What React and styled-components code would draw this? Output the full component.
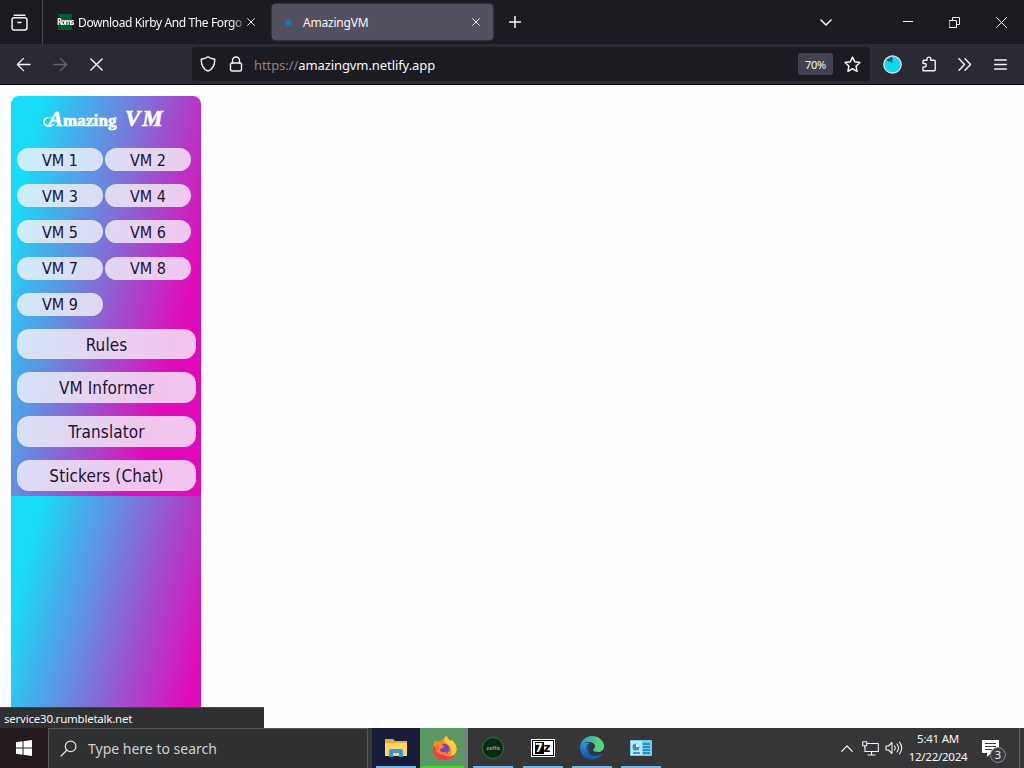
import styled, { createGlobalStyle, css } from "styled-components";

const vmRooms = [1, 2, 3, 4, 5, 6, 7, 8, 9];
const links = ["Rules", "VM Informer", "Translator", "Stickers (Chat)"];

const Icon = ({ w = 16, h = w, box = "0 0 16 16", sw = 1.4, color = "#f4f4f8", children }) => (
  <svg width={w} height={h} viewBox={box} fill="none" stroke={color} strokeWidth={sw}
       strokeLinecap="round" strokeLinejoin="round">
    {children}
  </svg>
);

const CloseIcon = ({ size = 8, sw = 1.2 }) => (
  <Icon w={size} sw={sw} box="0 0 10 10"><path d="M.7.7l8.6 8.6M9.3.7L.7 9.3" /></Icon>
);

const TabStrip = () => (
  <TabBar>
    <ViewButton>
      <Icon w={17}>
        <path d="M3 1.2h10M1 5.5q0-2 2-2h10q2 0 2 2V13q0 2-2 2H3q-2 0-2-2zM6.500 8h3" />
      </Icon>
    </ViewButton>
    <Tab $width={218}>
      <RomsIcon>Roms</RomsIcon>
      <TabTitle $fade $width={167}>Download Kirby And The Forgo</TabTitle>
      <CloseIcon />
    </Tab>
    <Tab $active $width={221}>
      <LoadingDot />
      <TabTitle $width={167}>AmazingVM</TabTitle>
      <CloseIcon />
    </Tab>
    <NewTab><Icon w={12} box="0 0 12 12" sw={1.5}><path d="M6 .5v11M.5 6h11" /></Icon></NewTab>
    <WindowButtons>
      <Icon w={12} h={7} box="0 0 12 7" sw={1.5}><path d="M1 1l5 5 5-5" /></Icon>
      <Icon w={10} h={10} box="0 0 10 10" sw={1}><path d="M0 4.500h10" /></Icon>
      <Icon w={11} h={11} box="0 0 11 11" sw={1}>
        <path d="M.5 3.500h7v7h-7zM3.500 3V.5h7v7H8" />
      </Icon>
      <Icon w={11} h={11} box="0 0 11 11" sw={1}><path d="M.5.5l10 10M10.500.5l-10 10" /></Icon>
    </WindowButtons>
  </TabBar>
);

const Navigation = () => (
  <NavBar>
    <NavButtons>
      <Icon w={15}><path d="M15 8H1.500M8 1.500L1.500 8 8 14.500" /></Icon>
      <Icon w={15} color="#66656d"><path d="M1 8h13.500M8 1.500L14.500 8 8 14.500" /></Icon>
      <CloseIcon size={13} sw={1.1} />
    </NavButtons>
    <AddressBar>
      <Icon w={16}>
        <path d="M8 .8C6 2.300 3.500 3 1.200 3.200c0 5.500 1.500 9.800 6.800 12 5.300-2.200 6.800-6.500 6.800-12C12.500 3 10 2.300 8 .8z" />
      </Icon>
      <Icon w={14} h={16} box="0 0 14 16">
        <rect x="1.500" y="7" width="11" height="8" rx="1.500" />
        <path d="M3.500 7V4.500a3.500 3.500 0 0 1 7 0V7" />
      </Icon>
      <Address><span>https://</span>amazingvm.netlify.app</Address>
      <Zoom>70%</Zoom>
      <Icon w={17}>
        <path d="M8 1l2.100 4.500 4.900.6-3.600 3.400.9 4.900L8 12l-4.300 2.400.9-4.900L1 6.100l4.900-.6z" />
      </Icon>
    </AddressBar>
    <Extensions>
      <svg width="19" height="19" viewBox="0 0 19 19">
        <circle cx="9.500" cy="9.500" r="8.700" fill="#0bdcf2" stroke="#d8e4ea" strokeWidth="1.300" />
        <path d="M9.500 8L3.800 5.200 5.500 3.200 7.500 4.500V2l2 .5z" fill="#164a60" />
      </svg>
      <Icon w={16} sw={1.4}>
        <path d="M2 14.800V11h1.500a1.700 1.700 0 0 0 0-3.500H2V5q0-.8.8-.8H6V3a1.900 1.900 0 0 1 3.800 0v1.200h3.400q1 0 1 1v8.600q0 1-1 1z" />
      </Icon>
      <Icon w={14} h={13} box="0 0 14 13"><path d="M1 .7l5.500 5.800L1 12.300M7 .7l5.500 5.800L7 12.300" /></Icon>
      <Icon w={13} h={11} box="0 0 13 11"><path d="M.7 1h11.600M.7 5.500h11.600M.7 10h11.600" /></Icon>
    </Extensions>
  </NavBar>
);

const Sidebar = () => (
  <Panel>
    <Title><em>A</em>mazing <i>VM</i></Title>
    <Rooms>
      {vmRooms.map((room) => <RoomButton key={room}>VM {room}</RoomButton>)}
    </Rooms>
    <Links>
      {links.map((link) => <LinkButton key={link}>{link}</LinkButton>)}
    </Links>
  </Panel>
);

const FolderIcon = () => (
  <svg width="22" height="20" viewBox="0 0 22 20">
    <path d="M0 1h8l2 2h12v15H0z" fill="#e8a92c" />
    <path d="M0 5h22v13H0z" fill="#ffd568" />
    <path d="M4 19v-6q0-2 2-2h10q2 0 2 2v6h-4v-4H8v4z" fill="#3b94d4" />
  </svg>
);

const FirefoxIcon = () => (
  <svg width="25" height="25" viewBox="0 0 25 25">
    <path d="M14 0c3 2 3 4 4 5l2-1c3 3 5 6 4.500 10A12 12 0 0 1 .7 13C.5 9 2 6 4 4l1 2 3-1c2 0 3-3 6-5z" fill="#ff8a22" />
    <path d="M14 0c3 2 3 4 4 5l2-1c3 3 5 7 4.500 10-1 4-3 6-6 7 2-6 1-12-5-14-2-2-1-5 .5-7z" fill="#ffcf35" />
    <path d="M1 9c-1 9 4 15 12 15 5 0 8-2 10-6-5 4-10 3-13-1z" fill="#f43651" />
    <circle cx="12.500" cy="13" r="5" fill="#823bc6" />
    <path d="M3 8c3-1 4-1 6 1l3 1c0 2-3 2-4 4 1 3 5 3 7 1-1 5-9 5-11 0z" fill="#ff842c" />
  </svg>
);

const EdgeIcon = () => (
  <svg width="24" height="24" viewBox="0 0 24 24">
    <defs>
      <linearGradient id="edgeTop"><stop stopColor="#229dda" /><stop offset="1" stopColor="#62dc69" /></linearGradient>
      <linearGradient id="edgeSide" x2="0" y2="1"><stop stopColor="#2795df" /><stop offset="1" stopColor="#0d4d9e" /></linearGradient>
    </defs>
    <path d="M0 11C1 4 6 0 12 0c7 0 12 5 12 10 0 4-3 6-6 6-3 0-5-1-5-2s2-1 2-4c0-2-3-4-6-4-4 0-8 2-9 5z" fill="url(#edgeTop)" />
    <path d="M0 11c1-4 6-5 10-4-3 1-4 4-3 8 1 4 5 7 9 8-8 3-16-3-16-12z" fill="url(#edgeSide)" />
    <path d="M10 9c-4 4-1 11 5 11 3 0 5-1 7-2 1 0 0 1-1 2-3 3-8 4-11 1-5-4-4-11 0-12z" fill="#1262aa" />
  </svg>
);

const ControlPanelIcon = () => (
  <svg width="22" height="16" viewBox="0 0 22 16">
    <rect width="22" height="16" rx="1" fill="#72cdf2" />
    <rect x="1" y="1" width="11" height="14" fill="#b9eafa" />
    <circle cx="6" cy="7" r="3.500" fill="#2a91c8" />
    <path d="M6 3.500V7h3.500A3.500 3.500 0 0 0 6 3.500z" fill="#e4faff" />
    <path d="M13 4h7M13 7h7M13 10h7M3 13h7M13 13h7" stroke="#1478b5" strokeWidth="1.500" />
  </svg>
);

const Taskbar = () => (
  <TaskbarRow>
    <Start>
      <svg width="16" height="16" viewBox="0 0 16 16" fill="#fff">
        <path d="M0 2.200L6.500 1.300v6.200H0zM7.500 1.200L16 0v7.500H7.500zM0 8.500h6.500v6.200L0 13.800zM7.500 8.500H16V16l-8.500-1.200z" />
      </svg>
    </Start>
    <Search>
      <Icon w={17} sw={1.2} color="#e3e3e3"><circle cx="10" cy="6" r="5" /><path d="M6.300 9.700L1 15" /></Icon>
      Type here to search
    </Search>
    <Apps>
      <TaskApp $bg="#171d36" $width={48} $line={40}><FolderIcon /></TaskApp>
      <TaskApp $bg="#5a9a62" $bar="#4bd034" $width={48} $line={48} $divider><FirefoxIcon /></TaskApp>
      <TaskApp $width={50}><GreenBadge>zeffa</GreenBadge></TaskApp>
      <TaskApp $width={49}>
        <SevenZip><b>7</b><small>z</small></SevenZip>
      </TaskApp>
      <TaskApp $width={49}><EdgeIcon /></TaskApp>
      <TaskApp $width={49}><ControlPanelIcon /></TaskApp>
    </Apps>
    <Tray>
      <Icon w={12} h={7} box="0 0 12 7" sw={1.2}><path d="M.7 6.300L6 1l5.300 5.300" /></Icon>
      <Icon w={17} h={15} box="0 0 17 15" sw={1.1}>
        <path d="M5 2.500h11.300v8H3V6M9.500 10.500V14M6 14h7M.7.700h4v4h-4zM2.700 4.700V7" />
      </Icon>
      <Icon w={18} h={14} box="0 0 18 14" sw={1.1}>
        <path d="M1 5h2.500l3.500-3.500v11L3.500 9H1zM9.500 5q1.500 2 0 4M12 3q3 4 0 8M14.500 1.200q4.500 5.800 0 11.600" />
      </Icon>
      <Clock><span>5:41 AM</span><span>12/22/2024</span></Clock>
      <Notifications>
        <svg width="17" height="17" viewBox="0 0 17 17">
          <path d="M0 0h17v13H9l-4 4v-4H0z" fill="#fff" />
          <path d="M3 3.500h11M3 6.500h11M3 9.500h7" stroke="#393a3c" strokeWidth="1.200" />
        </svg>
        <Count>3</Count>
      </Notifications>
      <ShowDesktop />
    </Tray>
  </TaskbarRow>
);

export default function App() {
  return (
    <Screen>
      <GlobalStyle />
      <TabStrip />
      <Navigation />
      <Page>
        <Sidebar />
        <Status>service30.rumbletalk.net</Status>
      </Page>
      <Taskbar />
    </Screen>
  );
}

const GlobalStyle = createGlobalStyle`
  * { box-sizing: border-box; }
  body { margin: 0; overflow: hidden; }
  svg { display: block; flex: none; }
`;

const Screen = styled.div`
  display: flex;
  flex-direction: column;
  width: 1024px;
  height: 768px;
  overflow: hidden;
  font-family: "Noto Sans", "Open Sans", sans-serif;
  color: #f7f7fa;
  background: #fefefe;
`;

const TabBar = styled.div`
  display: flex;
  align-items: center;
  height: 44px;
  background: #1c1b22;
`;

const ViewButton = styled.div`
  display: flex;
  align-items: center;
  width: 43px;
  height: 44px;
  padding-left: 11px;
  border-right: 1px solid #4b4a52;
`;

const Tab = styled.div`
  display: flex;
  align-items: center;
  width: ${({ $width }) => $width}px;
  height: 36px;
  padding-left: 14px;
  border-radius: 4px;

  ${({ $active }) => $active && css`
    margin-left: 11px;
    padding-left: 12px;
    background: #53505f;
    box-shadow: 0 0 2px #777480;
  `}
`;

const TabTitle = styled.span`
  width: ${({ $width }) => $width}px;
  margin: 1px 2px 0 5px;
  font-size: 12px;
  line-height: 18px;
  letter-spacing: -0.2px;
  white-space: nowrap;

  ${({ $fade }) => $fade && css`
    letter-spacing: -0.38px;
    mask-image: linear-gradient(90deg, #000 92%, rgba(0, 0, 0, 0.2) 100%);
  `}
`;

const RomsIcon = styled.span`
  display: flex;
  align-items: center;
  justify-content: center;
  flex: none;
  width: 16px;
  height: 16px;
  background: #07582e;

  /* squeezed lettering */
  font: bold 9px "DejaVu Sans Condensed", "Liberation Sans", sans-serif;
  letter-spacing: -1.5px;
  transform: scaleX(0.85);
`;

const LoadingDot = styled.i`
  flex: none;
  width: 7px;
  height: 7px;
  margin: 0 6px 0 1px;
  border-radius: 50%;
  background: #286fae;
`;

const NewTab = styled.div`
  margin-left: 16px;
`;

const WindowButtons = styled.div`
  display: grid;
  grid-template-columns: 12px 10px 11px 11px;
  align-items: center;
  column-gap: 36px;
  margin-left: auto;
  margin-right: 17px;

  & > :first-child { margin-left: -35px; }
`;

const NavBar = styled.div`
  display: flex;
  align-items: center;
  height: 41px;
  padding-left: 16px;
  background: #2b2a33;
  border-bottom: 1px solid #08070c;
`;

const NavButtons = styled.div`
  display: flex;
  align-items: center;
  gap: 22px;
  width: 176px;
`;

const AddressBar = styled.div`
  display: flex;
  align-items: center;
  width: 678px;
  height: 34px;
  padding: 0 9px 0 8px;
  border-radius: 4px;
  background: #1c1b22;

  & > svg + svg { margin-left: 13px; }
`;

const Address = styled.div`
  flex: 1;
  margin: 2px 0 0 11px;
  font-size: 13px;
  line-height: 20px;
  letter-spacing: -0.08px;

  span { color: #85848c; }
`;

const Zoom = styled.span`
  width: 35px;
  height: 22px;
  margin-right: 11px;
  border-radius: 3px;
  background: #42414d;
  font-size: 11px;
  line-height: 23px;
  letter-spacing: -0.2px;
  text-align: center;
`;

const Extensions = styled.div`
  display: grid;
  grid-template-columns: 19px 16px 14px 13px;
  align-items: center;
  column-gap: 20px;
  margin-left: 13px;

  & > :nth-child(2) { margin-left: -1px; }
  & > :last-child { margin-left: 2px; }
`;

const Page = styled.main`
  position: relative;
  flex: 1;
  padding: 11px 0 0 11px;
  overflow: hidden;
`;

const Panel = styled.aside`
  width: 190px;
  height: 640px;
  padding: 10px 5px 0 6px;
  border-radius: 8px;
  background: linear-gradient(105deg, #18dcf8 11%, #e00bb8 78%) 0 0 / 190px 400px;
  color: #1b1237;
  font-family: "DejaVu Sans Condensed", "DejaVu Sans", sans-serif;
  font-stretch: condensed;
`;

const Title = styled.h1`
  display: flex;
  justify-content: center;
  align-items: baseline;
  height: 25px;
  margin: 0 0 17px;
  color: #fff;
  font: bold 17px/25px "Liberation Serif", serif;
  letter-spacing: 0.1px;
  white-space: pre;
  -webkit-text-stroke: 0.6px #fff;

  em {
    position: relative;
    font: italic bold 22px/25px "Liberation Serif", serif;
  }

  /* tail of the capital */
  em::before {
    content: "";
    position: absolute;
    left: -5px;
    bottom: 4px;
    width: 10px;
    height: 7px;
    border: solid #fff;
    border-width: 1px 0 2px 2px;
    border-radius: 50%;
  }

  i {
    margin-left: 4px;
    font: italic bold 23px/25px "Liberation Serif", serif;
    letter-spacing: 2px;
  }
`;

const Rooms = styled.div`
  display: grid;
  grid-template-columns: 86px 86px;
  grid-auto-rows: 23px;
  gap: 13.200px 2px;
`;

const pill = css`
  display: flex;
  align-items: center;
  justify-content: center;
  border: 0;
  border-radius: 12px;
  background: rgba(248, 242, 250, 0.8);
  color: inherit;
  font-family: inherit;
  font-stretch: inherit;
`;

const RoomButton = styled.button`
  ${pill}
  padding: 1px 0 0;
  font-size: 16px;
`;

const Links = styled.div`
  display: flex;
  flex-direction: column;
  gap: 13px;
  margin-top: 13px;
`;

const LinkButton = styled.button`
  ${pill}
  height: 30.700px;
  padding: 1px 0 0;
  font-size: 17px;
  letter-spacing: 0.1px;
`;

const Status = styled.div`
  position: absolute;
  left: 0;
  bottom: 0;
  width: 264px;
  height: 21px;
  padding-left: 4px;
  border-top: 1px solid #45444a;
  background: #2f3032;
  font-size: 11.500px;
  line-height: 21px;
  letter-spacing: -0.22px;
`;

const TaskbarRow = styled.footer`
  display: flex;
  height: 40px;
  background: #363638;
`;

const Start = styled.div`
  display: grid;
  place-items: center;
  width: 48px;
  background: #251b1d;
`;

const Search = styled.div`
  display: flex;
  align-items: center;
  gap: 11px;
  width: 320px;
  padding-left: 11px;
  border: 1px solid #555557;
  border-bottom: 0;
  background: #303133;
  color: #d0d0d0;
  font-size: 14px;
`;

const Apps = styled.div`
  display: flex;
  padding-left: 4px;
`;

const TaskApp = styled.div`
  display: grid;
  place-items: center;
  width: ${({ $width }) => $width}px;
  height: 40px;
  background:
    linear-gradient(${({ $bar }) => $bar || "#79b6e8"} 0 0) center bottom / ${({ $line }) => $line || 40}px 2px no-repeat,
    ${({ $bg }) => $bg || "transparent"};
  ${({ $divider }) => $divider && "box-shadow: inset -4px 0 #71877a;"}
`;

const GreenBadge = styled.span`
  width: 22px;
  height: 22px;
  border: 1px solid #267d36;
  border-radius: 50%;
  background: #082a17;
  color: #78a77c;
  font: bold 6px/20px "Liberation Sans", sans-serif;
  text-align: center;
`;

const SevenZip = styled.span`
  display: flex;
  align-items: center;
  justify-content: center;
  width: 22px;
  height: 16px;
  border: 1px solid #000;
  outline: 1px solid #fff;
  background: #fff;
  color: #000;
  font-family: "DejaVu Sans", sans-serif;

  b {
    width: 9px;
    height: 12px;
    background: #000;
    color: #fff;
    font-size: 12px;
    line-height: 12px;
    text-align: center;
  }
  small {
    font-size: 12px;
    font-weight: bold;
    line-height: 14px;
  }
`;

const Tray = styled.div`
  display: flex;
  align-items: center;
  margin-left: auto;
  width: 183px;

  & > svg { margin-right: 9px; }
  & > svg + svg { margin-right: 6px; }
`;

const Clock = styled.div`
  display: flex;
  flex-direction: column;
  align-items: center;
  width: 58px;
  font-size: 11.500px;
  line-height: 18px;
  letter-spacing: -0.25px;
  white-space: nowrap;
`;

const Notifications = styled.div`
  position: relative;
  margin-left: 15px;
`;

const Count = styled.span`
  position: absolute;
  left: 8px;
  top: 7px;
  width: 16px;
  height: 16px;
  border: 1px solid #898b8d;
  border-radius: 50%;
  background: #3b3c3f;
  font-size: 11px;
  line-height: 14px;
  text-align: center;
`;

const ShowDesktop = styled.span`
  width: 5px;
  height: 40px;
  margin-left: auto;
  border-left: 1px solid #67686a;
`;
